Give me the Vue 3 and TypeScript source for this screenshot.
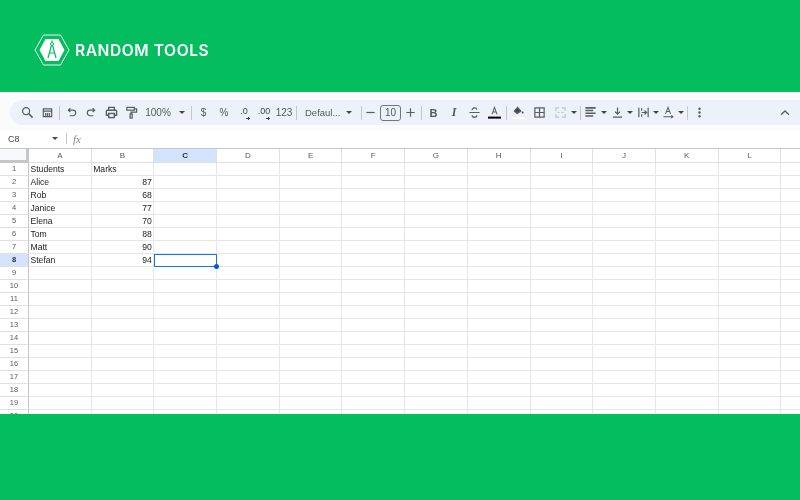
<script setup lang="ts">
type Tool = { k: string; w?: number; t?: string };
const tools: Tool[] = [
  { k: 'search' }, { k: 'save' }, { k: 'sep' }, { k: 'undo' }, { k: 'redo' }, { k: 'print' }, { k: 'paint' },
  { k: 'text', t: '100%', w: 34 }, { k: 'caret', w: 14 }, { k: 'sep' },
  { k: 'text', t: '$', w: 21 }, { k: 'text', t: '%', w: 20 }, { k: 'dec0' }, { k: 'dec00' }, { k: 'text', t: '123', w: 20 }, { k: 'sep' },
  { k: 'font' }, { k: 'sep' }, { k: 'minus', w: 14 }, { k: 'size' }, { k: 'plus', w: 18 }, { k: 'sep' },
  { k: 'bold', w: 21 }, { k: 'italic' }, { k: 'strike' }, { k: 'color' }, { k: 'sep' },
  { k: 'fill', w: 21 }, { k: 'borders', w: 21 }, { k: 'merge' }, { k: 'caret', w: 8 }, { k: 'sep' },
  { k: 'align', w: 16 }, { k: 'caret', w: 11 }, { k: 'valign', w: 16 }, { k: 'caret', w: 10 }, { k: 'wrap', w: 16 }, { k: 'caret', w: 9 }, { k: 'rotate', w: 16 }, { k: 'caret', w: 9 }, { k: 'sep' },
  { k: 'more' }
];
const cols = ['A', 'B', 'C', 'D', 'E', 'F', 'G', 'H', 'I', 'J', 'K', 'L'];
const data: [string, string][] = [
  ['Students', 'Marks'], ['Alice', '87'], ['Rob', '68'], ['Janice', '77'], ['Elena', '70'], ['Tom', '88'], ['Matt', '90'], ['Stefan', '94']
];
const rows = Array.from({ length: 20 }, (_, i) => i + 1);
const cell = (r: number, c: number): string => (r <= 8 && c < 2 ? data[r - 1][c] : '');
const width = (t: Tool) => ({ width: (t.w ?? 20) + 'px' });
</script>

<template>
  <div class="page">
    <header class="brand">
      <svg class="logo" viewBox="0 0 36 32" width="36" height="32">
        <path d="M9.5 1 H26.5 L35 16 L26.5 31 H9.5 L1 16 Z" fill="none" stroke="#fff" stroke-width=".9" />
        <path d="M11.5 5 H24.5 L30.5 16 L24.5 27 H11.5 L5.5 16 Z" fill="#fff" />
        <circle cx="18" cy="10" r="1.5" fill="none" stroke="#03bd5f" stroke-width="1" />
        <path d="M17.5 11 L14 24 M18.5 11 L22 24 M18 6.5 V8.5 M15.5 19 H20.5" stroke="#03bd5f" stroke-width="1.2" fill="none" />
      </svg>
      <span class="brand-name">RANDOM TOOLS</span>
    </header>
    <main class="sheet">
      <div class="topband">
        <div class="toolbar">
          <template v-for="(t, i) in tools" :key="i">
            <span v-if="t.k === 'sep'" class="sep"></span>
            <span v-else-if="t.k === 'text'" class="tool txt" :style="width(t)">{{ t.t }}</span>
            <span v-else-if="t.k === 'caret'" class="tool" :style="width(t)"><i class="caret"></i></span>
            <span v-else-if="t.k === 'font'" class="font"><span>Defaul...</span><i class="caret"></i></span>
            <span v-else-if="t.k === 'size'" class="size">10</span>
            <span v-else-if="t.k === 'bold'" class="tool fmt b" :style="width(t)">B</span>
            <span v-else-if="t.k === 'italic'" class="tool fmt it">I</span>
            <span v-else-if="t.k === 'dec0' || t.k === 'dec00'" class="tool dec">{{ t.k === 'dec0' ? '.0' : '.00' }}<i class="arrow"></i></span>
            <span v-else class="tool" :style="width(t)">
              <svg viewBox="0 0 14 14" width="13" height="13" fill="none" stroke="#5a5e60" stroke-width="1.3">
                <template v-if="t.k === 'search'"><circle cx="5.5" cy="5.5" r="3.8" /><path d="M8.5 8.5 L12.5 12.5" stroke-width="1.6" /></template>
                <template v-if="t.k === 'save'"><path d="M2.5 3 H11.5 V11.5 H2.5 Z M2.5 5.5 H11.5 M5 7.5 V11.5 M7 7.5 V11.5 M9 7.5 V11.5" /></template>
                <template v-if="t.k === 'undo'"><path d="M4 4.5 H8.5 A2.8 2.8 0 0 1 8.5 10.5 H5 M5.8 2.5 L3.6 4.5 L5.8 6.5" /></template>
                <template v-if="t.k === 'redo'"><path d="M10 4.5 H5.5 A2.8 2.8 0 0 0 5.5 10.5 H9 M8.2 2.5 L10.4 4.5 L8.2 6.5" /></template>
                <template v-if="t.k === 'print'"><path d="M4 4.5 V1.5 H10 V4.5 M4 10 H1.5 V5.5 A1 1 0 0 1 2.5 4.5 H11.5 A1 1 0 0 1 12.5 5.5 V10 H10" stroke-width="1.5" /><rect x="4" y="8" width="6" height="4.5" stroke-width="1.5" /></template>
                <template v-if="t.k === 'paint'"><rect x="2" y="1.5" width="8" height="3" /><path d="M10 3 H12.5 V6.5 H6.5 V8.5" /><rect x="5.5" y="8.5" width="2.2" height="4.5" /></template>
                <template v-if="t.k === 'minus'"><path d="M2.5 7 H11.5" /></template>
                <template v-if="t.k === 'plus'"><path d="M2.5 7 H11.5 M7 2.5 V11.5" /></template>
                <template v-if="t.k === 'strike'"><path d="M1.5 7 H12.5 M4.5 4.5 A2.5 2.2 0 0 1 9.5 4 M4.5 10 A2.5 2.2 0 0 0 9.5 10" /></template>
                <template v-if="t.k === 'color'"><path d="M4.3 9 L7 1.5 L9.7 9 M5.2 6.5 H8.8" stroke-width="1.1" /><path d="M0 12.5 H14" stroke="#000" stroke-width="2.2" /></template>
                <template v-if="t.k === 'fill'"><path d="M6 1.5 L9.5 5.5 L5.5 8 L2.5 5.5 Z" fill="#444746" /><circle cx="11.5" cy="7" r="1" fill="#444746" stroke="none" /><path d="M0 13 H14" stroke="#fff" stroke-width="2" /></template>
                <template v-if="t.k === 'borders'"><path d="M2 2 H12 V12 H2 Z M2 7 H12 M7 2 V12" /></template>
                <template v-if="t.k === 'merge'"><path stroke="#c3c5c7" d="M2 5 V2 H5.5 M8.5 2 H12 V5 M12 9 V12 H8.5 M5.5 12 H2 V9 M4 7 H6 M10 7 H8" /></template>
                <template v-if="t.k === 'align'"><path stroke-width="1.7" d="M1.5 2 H12.5 M1.5 4.9 H10 M1.5 7.8 H12.5 M1.5 10.7 H10" /></template>
                <template v-if="t.k === 'valign'"><path d="M7 1.5 V8.5 M4.2 6 L7 8.8 L9.8 6 M2 12 H12" /></template>
                <template v-if="t.k === 'wrap'"><path d="M2 2 V12 M12 2 V12 M5 7 H10 M8 4.8 L10.3 7 L8 9.2 M5 2.5 V5 M5 9 V11.5" /></template>
                <template v-if="t.k === 'rotate'"><path d="M3.8 8.5 L6.5 1.5 L9.2 8.5 M4.7 6 H8.3 M1.5 11.5 H11 M10 10 L11.8 11.5 L10 13" stroke-width="1.1" /></template>
                <template v-if="t.k === 'more'"><circle cx="7" cy="3" r=".7" fill="#444746" /><circle cx="7" cy="7" r=".7" fill="#444746" /><circle cx="7" cy="11" r=".7" fill="#444746" /></template>
              </svg>
            </span>
          </template>
          <span class="collapse">
            <svg viewBox="0 0 14 14" width="14" height="14" fill="none" stroke="#5a5e60" stroke-width="1.3"><path d="M3 8.7 L7 5 L11 8.7" /></svg>
          </span>
        </div>
      </div>
      <div class="formula">
        <span class="namebox">C8</span><i class="caret"></i><span class="fsep"></span><span class="fx">fx</span>
      </div>
      <div class="grid">
        <div class="corner"></div>
        <div v-for="(c, i) in cols" :key="c" class="ch" :class="{ on: i === 2 }">{{ c }}</div>
        <div class="ch"></div>
        <template v-for="r in rows" :key="r">
          <div class="rh" :class="{ on: r === 8 }">{{ r }}</div>
          <div v-for="(c, i) in cols" :key="c" class="td" :class="{ num: i === 1 && r > 1, sel: r === 8 && i === 2 }">{{ cell(r, i) }}<i v-if="r === 8 && i === 2" class="handle"></i></div>
          <div class="td"></div>
        </template>
      </div>
    </main>
    <footer class="bottom"></footer>
  </div>
</template>

<style>
html, body { margin: 0; padding: 0; background: #03bd5f; }
</style>

<style scoped>
.page { width: 800px; height: 500px; display: flex; flex-direction: column; background: #03bd5f; overflow: hidden; font-family: "Liberation Sans", Arial, sans-serif; }
.brand { height: 92px; flex: none; box-sizing: border-box; padding: 8px 0 0 34px; display: flex; align-items: center; gap: 5px; }
.logo { flex: none; }
.brand-name { font-family: Inter, "Liberation Sans", sans-serif; font-weight: 600; font-size: 15.6px; letter-spacing: .55px; color: #fff; white-space: nowrap; filter: blur(.3px); }
.sheet { height: 322px; flex: none; background: #fff; overflow: hidden; display: flex; flex-direction: column; filter: blur(.45px); }
.topband { background: #f9fbfd; padding: 8px 0 5px 10px; flex: none; }
.toolbar { height: 25px; background: #edf2fa; border-radius: 13px 0 0 13px; display: flex; align-items: center; padding-left: 7px; color: #444746; }
.tool { width: 20px; height: 20px; flex: none; display: flex; align-items: center; justify-content: center; position: relative; }
.txt { font-size: 10px; color: #55595b; }
.dec { font-size: 9px; color: #444746; padding-bottom: 3px; box-sizing: border-box; }
.arrow { position: absolute; right: 4px; bottom: 4px; width: 4px; height: 1px; background: #444746; }
.arrow::before { content: ""; position: absolute; left: 1.5px; top: -1px; width: 1px; height: 3px; background: #444746; }
.fmt { font-size: 11px; color: #55595b; }
.b { font-weight: 700; }
.it { font-style: italic; font-weight: 700; font-family: "Liberation Serif", serif; font-size: 12px; }
.sep { width: 1px; height: 14px; background: #c7c7c7; flex: none; margin: 0 1px 0 2px; }
.caret { display: inline-block; width: 0; height: 0; border-left: 3px solid transparent; border-right: 3px solid transparent; border-top: 3px solid #444746; }
.font { width: 61px; flex: none; display: flex; align-items: center; font-size: 9.5px; color: #55595b; padding: 0 7px; box-sizing: border-box; justify-content: space-between; }
.size { width: 19px; height: 14px; margin-left: 3px; border: 1px solid #747775; border-radius: 3px; flex: none; display: flex; align-items: center; justify-content: center; font-size: 10px; color: #55595b; }
.collapse { margin-left: auto; margin-right: 8px; width: 14px; height: 14px; }
.formula { height: 17px; flex: none; display: flex; align-items: center; font-size: 9px; color: #444746; padding-left: 8px; box-sizing: border-box; }
.namebox { width: 44px; }
.fsep { width: 1px; height: 11px; background: #c7c7c7; margin-left: 8px; }
.fx { margin-left: 6px; font-family: "Liberation Serif", serif; font-style: italic; font-size: 11px; color: #80868b; }
.grid { margin-top: 1px; display: grid; grid-template-columns: 29px repeat(12, 62.7px) 40px; grid-auto-rows: 13px; grid-template-rows: 14px; border-top: 1px solid #c4c7c5; font-size: 8.6px; color: #222; }
.corner { background: #f8f9fa; border-right: 3px solid #c4c7c5; border-bottom: 3px solid #c4c7c5; box-sizing: border-box; }
.ch { box-sizing: border-box; background: #fff; border-right: 1px solid #e0e0e0; border-bottom: 1px solid #e0e0e0; text-align: center; font-size: 8px; line-height: 14px; color: #55595b; }
.rh { box-sizing: border-box; background: #fff; border-right: 1px solid #c4c7c5; border-bottom: 1px solid #e0e0e0; text-align: center; font-size: 7.5px; line-height: 12px; color: #55595b; }
.on { background: #d3e3fd; color: #1f2a44; font-weight: 700; }
.td { box-sizing: border-box; border-right: 1px solid #e6e6e6; border-bottom: 1px solid #e6e6e6; line-height: 12px; padding: 0 1.5px; position: relative; white-space: nowrap; }
.num { text-align: right; }
.sel { outline: 1.5px solid #1a73e8; outline-offset: -1px; z-index: 1; }
.handle { position: absolute; right: -3px; bottom: -3px; width: 5px; height: 5px; border-radius: 50%; background: #0b57d0; }
.bottom { flex: 1; }
</style>
